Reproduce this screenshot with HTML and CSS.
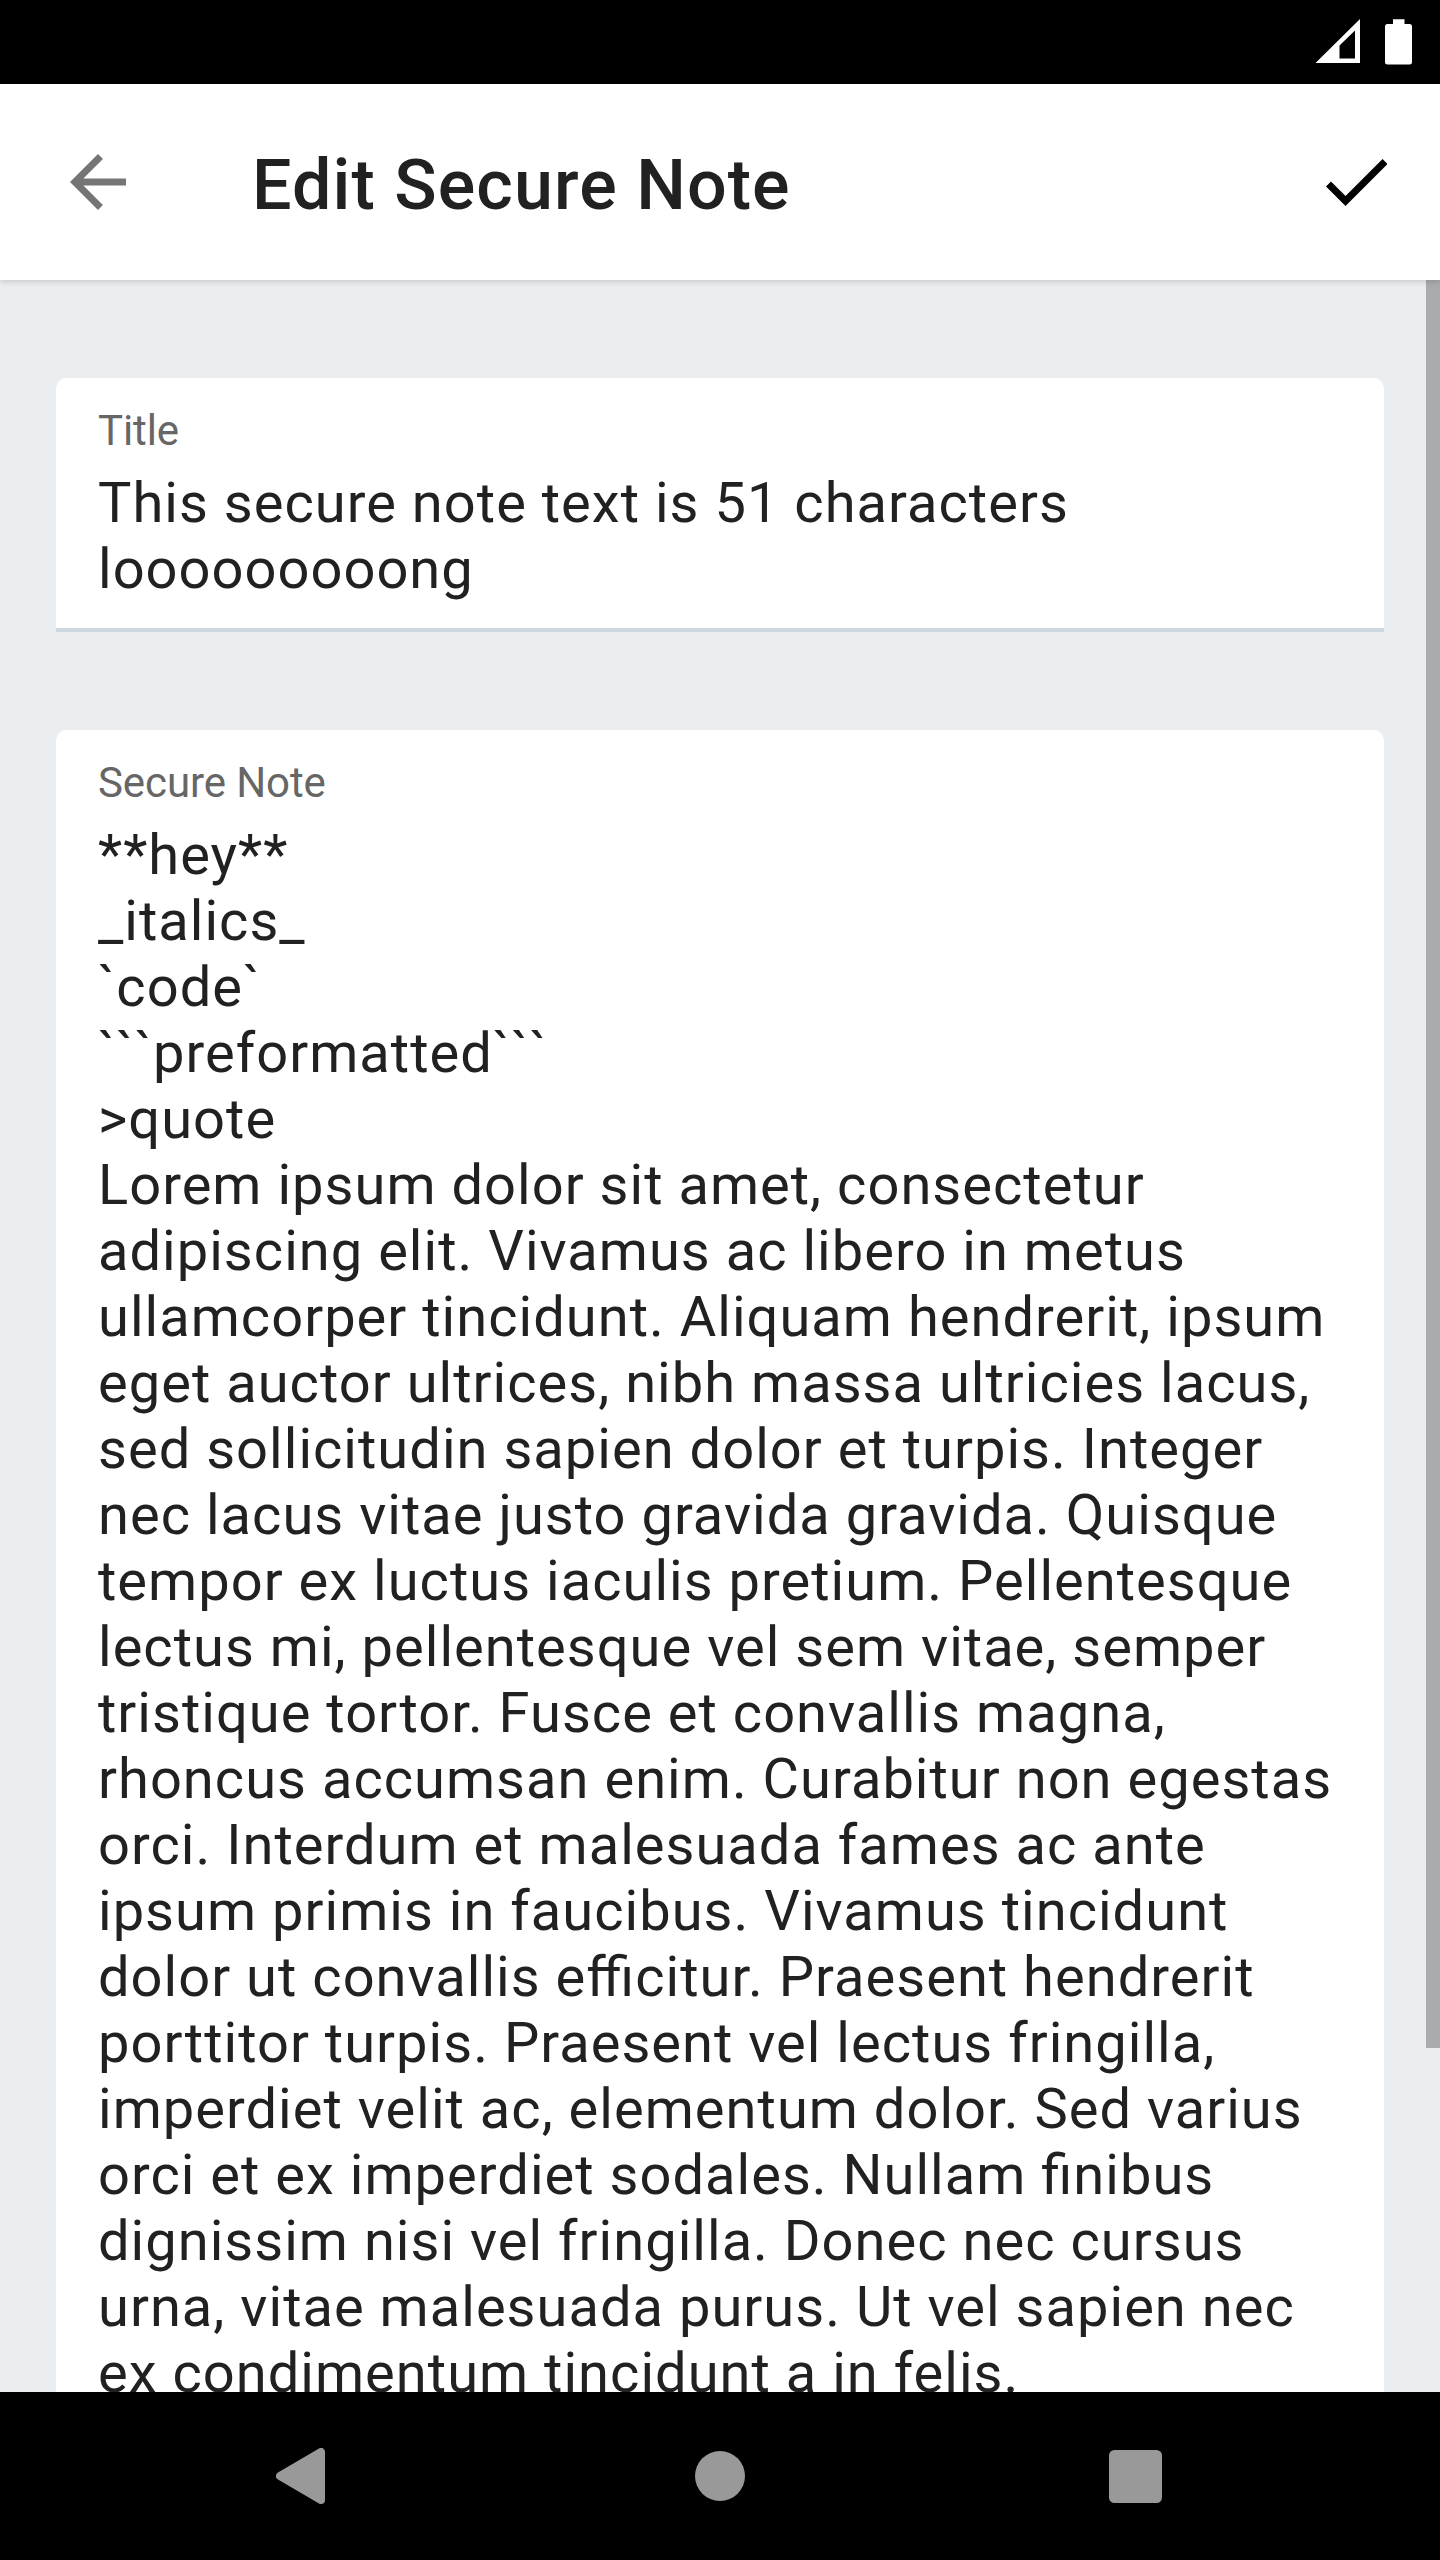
FILE: index.html
```html
<!DOCTYPE html>
<html lang="en">
<head>
<meta charset="utf-8">
<title>Edit Secure Note</title>
<link rel="stylesheet" href="styles.css">
</head>
<body>
<div class="screen">
  <div class="status">
    <svg width="45" height="44" viewBox="0 0 45 44"><path fill="#fff" fill-rule="evenodd" d="M45 0V44H.5ZM40 11.5L24.500 26.500V39.500H40Z"/></svg>
    <svg width="27" height="46" viewBox="0 0 27 46"><path fill="#fff" d="M8 .3H19.500V5H24.500Q27 5 27 7.500V43Q27 45.500 24.500 45.500H2.500Q0 45.500 0 43V7.500Q0 5 2.500 5H8Z"/></svg>
  </div>
  <header class="bar">
    <svg width="56" height="56" viewBox="4 4 16 16"><path fill="#757575" d="M20 11H7.830l5.590-5.590L12 4l-8 8 8 8 1.410-1.410L7.830 13H20z"/></svg>
    <h1 class="heading">Edit Secure Note</h1>
    <svg width="61.500" height="47" viewBox="3.410 5.590 17.590 13.410"><path d="M9 16.170L4.830 12l-1.420 1.410L9 19 21 7l-1.410-1.410z"/></svg>
  </header>
  <main class="content">
    <section class="field title-field">
      <div class="label">Title</div>
      <div class="value">This secure note text is 51 characters<br>looooooooong</div>
    </section>
    <section class="field note-field">
      <div class="label">Secure Note</div>
      <div class="value">**hey**<br>_italics_<br>`code`<br>```preformatted```<br>&gt;quote<br>Lorem ipsum dolor sit amet, consectetur<br>adipiscing elit. Vivamus ac libero in metus<br>ullamcorper tincidunt. Aliquam hendrerit, ipsum<br>eget auctor ultrices, nibh massa ultricies lacus,<br>sed sollicitudin sapien dolor et turpis. Integer<br>nec lacus vitae justo gravida gravida. Quisque<br>tempor ex luctus iaculis pretium. Pellentesque<br>lectus mi, pellentesque vel sem vitae, semper<br>tristique tortor. Fusce et convallis magna,<br>rhoncus accumsan enim. Curabitur non egestas<br>orci. Interdum et malesuada fames ac ante<br>ipsum primis in faucibus. Vivamus tincidunt<br>dolor ut convallis efficitur. Praesent hendrerit<br>porttitor turpis. Praesent vel lectus fringilla,<br>imperdiet velit ac, elementum dolor. Sed varius<br>orci et ex imperdiet sodales. Nullam finibus<br>dignissim nisi vel fringilla. Donec nec cursus<br>urna, vitae malesuada purus. Ut vel sapien nec<br>ex condimentum tincidunt a in felis.</div>
    </section>
    <div class="scrollbar"></div>
  </main>
  <nav class="nav">
    <svg width="49" height="56" viewBox="0 0 49 56"><path fill="#999" stroke="#999" stroke-width="8" stroke-linejoin="round" d="M4 28L45 4V52Z"/></svg>
    <svg width="50" height="50" viewBox="0 0 50 50"><circle cx="25" cy="25" r="25" fill="#999"/></svg>
    <svg class="recents" width="53" height="53" viewBox="0 0 53 53"><rect width="53" height="53" rx="5.500" fill="#999"/></svg>
  </nav>
</div>
</body>
</html>
```
FILE: styles.css
```css
body { margin: 0; font-family: Roboto, "Liberation Sans", sans-serif; color: #212121; }
.screen { width: 1440px; height: 2560px; display: flex; flex-direction: column; overflow: hidden; background: #eaeef1; }
.status { height: 84px; box-sizing: border-box; flex: none; background: #000; display: flex; justify-content: flex-end; align-items: flex-start; gap: 25px; padding: 19px 28px 0 0; }
.bar { height: 196px; box-sizing: border-box; flex: none; background: #fff; display: flex; align-items: center; padding: 0 53px 0 70px; box-shadow: 0 2px 6px rgba(0,0,0,.15); z-index: 1; }
.heading { flex: 1; margin: 0 0 0 126px; padding-top: 5px; font-size: 70px; line-height: 84px; font-weight: 500; letter-spacing: 1.08px; white-space: nowrap; }
.content { position: relative; height: 2112px; flex: none; overflow: hidden; box-sizing: border-box; padding: 98px 56px 0; }
.field { box-sizing: border-box; background: #fff; border-radius: 11px; padding: 29px 42px 0; }
.title-field { height: 254px; border-radius: 11px 11px 0 0; border-bottom: 4px solid #cfd8de; margin-bottom: 98px; }
.note-field { height: 1900px; }
.label { font-size: 42px; line-height: 48px; color: #666; letter-spacing: -.1px; }
.value { font-size: 56px; line-height: 66px; letter-spacing: 1.03px; font-feature-settings: "liga" 1; margin-top: 15px; white-space: nowrap; }
.scrollbar { position: absolute; right: 0; top: 0; width: 14px; height: 1768px; background: #aaabad; }
.nav { flex: 1; background: #000; display: flex; align-items: center; gap: 370px; padding-left: 276px; }
.recents { margin-left: -6.5px; }
```
